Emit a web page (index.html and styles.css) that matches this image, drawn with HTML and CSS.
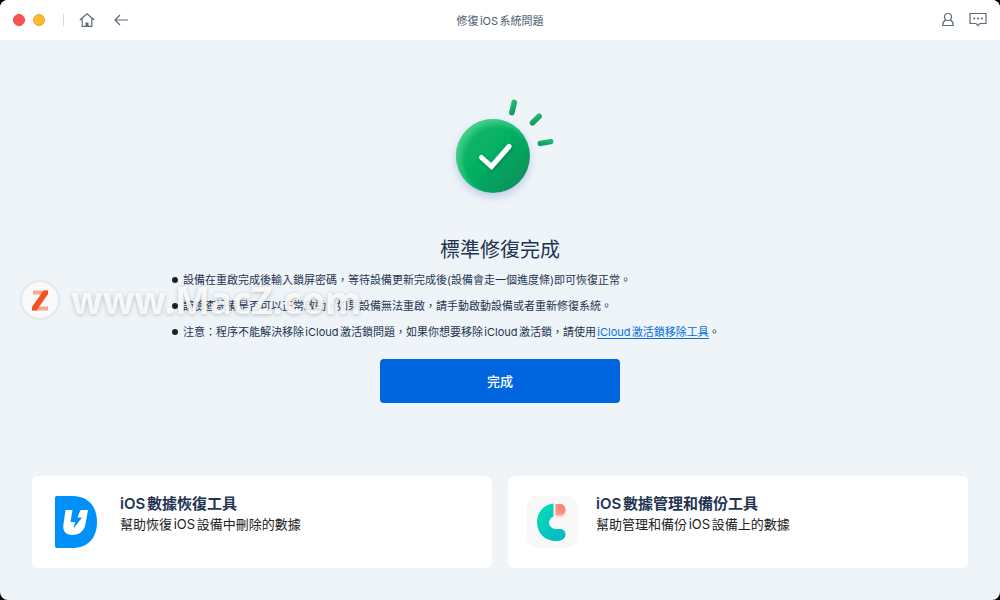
FILE: index.html
```html
<!DOCTYPE html>
<html lang="zh-Hant">
<head>
    <meta charset="UTF-8">
    <meta name="viewport" content="width=device-width, initial-scale=1.0">
    <title>修復iOS系統問題</title>
    <link rel="stylesheet" href="styles.css">
</head>
<body>
    <div class="window">
        <header class="titlebar">
            <div class="titlebar-side">
                <button class="dot dot-close" aria-label="關閉"></button>
                <button class="dot dot-min" aria-label="最小化"></button>
                <span class="divider"></span>
                <button class="icon-btn" aria-label="首頁">
                    <svg width="16" height="16" viewBox="0 0 16 16">
                        <path d="M.8 8 8 1.8 15.2 8M3.2 6.5V14.4H12.8V6.5" />
                        <path class="door" d="M6.5 14.4V10.5H9.5V14.4Z" />
                    </svg>
                </button>
                <button class="icon-btn icon-back" aria-label="返回">
                    <svg width="16" height="16" viewBox="0 0 16 16">
                        <path d="M15 8H2M7 3 2 8 7 13" />
                    </svg>
                </button>
            </div>
            <h1 class="titlebar-title">修復iOS系統問題</h1>
            <div class="titlebar-side titlebar-right">
                <button class="icon-btn" aria-label="帳戶">
                    <svg width="14" height="16" viewBox="0 0 14 16">
                        <circle cx="7" cy="5" r="3.5" />
                        <path d="M4.6 8C2.7 9 1.7 11 1.7 13.5H12.3C12.3 11 11.3 9 9.4 8" />
                    </svg>
                </button>
                <button class="icon-btn" aria-label="意見反饋">
                    <svg width="18" height="16" viewBox="0 0 18 16">
                        <path d="M1 1.5H17V11.5H11L9 13.7 7 11.5H1Z" />
                        <path class="dots" d="M4.5 6.5H6.2M8.2 6.5H9.9M11.9 6.5H13.6" />
                    </svg>
                </button>
            </div>
        </header>

        <main class="content">
            <svg class="success" width="120" height="120" viewBox="0 0 120 120" aria-hidden="true">
                <defs>
                    <linearGradient id="ball" x1="0" y1="0" x2="1" y2="1">
                        <stop offset="0" stop-color="#0cb868" />
                        <stop offset=".45" stop-color="#06b164" />
                        <stop offset="1" stop-color="#078a57" />
                    </linearGradient>
                    <radialGradient id="rim" cx=".56" cy=".56" r=".56">
                        <stop offset=".78" stop-color="#4fd894" stop-opacity="0" />
                        <stop offset="1" stop-color="#4fd894" stop-opacity=".75" />
                    </radialGradient>
                    <linearGradient id="ray" x1="0" y1="0" x2="1" y2="1">
                        <stop offset="0" stop-color="#2cc47c" />
                        <stop offset="1" stop-color="#0b9159" />
                    </linearGradient>
                    <filter id="ballShadow" x="-30%" y="-30%" width="160%" height="160%">
                        <feDropShadow dx="0" dy="4" stdDeviation="5" flood-color="#8fa3d8" flood-opacity=".5" />
                    </filter>
                    <filter id="checkShadow" x="-30%" y="-30%" width="160%" height="160%">
                        <feDropShadow dx="1" dy="2" stdDeviation="1.5" flood-color="#04683c" flood-opacity=".55" />
                    </filter>
                </defs>
                <circle cx="53" cy="66" r="37" fill="url(#ball)" filter="url(#ballShadow)" />
                <circle cx="53" cy="66" r="37" fill="url(#rim)" />
                <path class="check" d="M41.5 67.5 51.5 76.5 69 56.5" filter="url(#checkShadow)" />
                <g fill="url(#ray)">
                    <rect x="70.2" y="9.5" width="5.6" height="16" rx="2.8" transform="rotate(13 73 17.5)" />
                    <rect x="93" y="22" width="5.6" height="15" rx="2.8" transform="rotate(45 95.8 29.5)" />
                    <rect x="102.8" y="44.5" width="5.4" height="16" rx="2.7" transform="rotate(80 105.5 52.5)" />
                </g>
            </svg>
            <h2 class="headline">標準修復完成</h2>
            <ul class="notes">
                <li>設備在重啟完成後輸入鎖屏密碼，等待設備更新完成後(設備會走一個進度條)即可恢復正常。</li>
                <li>請檢查設備是否可以正常啟動，如果設備無法重啟，請手動啟動設備或者重新修復系統。</li>
                <li>注意：程序不能解決移除iCloud激活鎖問題，如果你想要移除iCloud激活鎖，請使用<a href="#">iCloud激活鎖移除工具</a>。</li>
            </ul>
            <button class="done">完成</button>
        </main>

        <section class="tools">
            <a class="tool" href="#">
                <svg width="52" height="52" viewBox="0 0 52 52" aria-hidden="true">
                    <path fill="#0090fb" d="M5 0H20C36 0 45 10 45 26S36 52 20 52H5Q3 52 3 50V2Q3 0 5 0Z" />
                    <path fill="#fff" d="M13.5 14H20.5L18.5 26H23L21.5 32.5 30 21.500H25.500L28.500 14H36L33.500 28C32 35.500 27 39 20.500 39C13.500 39 10.300 35 11.500 28Z" />
                </svg>
                <span class="tool-text">
                    <strong>iOS數據恢復工具</strong>
                    <span>幫助恢復iOS設備中刪除的數據</span>
                </span>
            </a>
            <a class="tool" href="#">
                <svg width="52" height="52" viewBox="0 0 52 52" aria-hidden="true">
                    <defs>
                        <linearGradient id="teal" x1="0" y1="0" x2="1" y2="1">
                            <stop offset="0" stop-color="#03dfb4" />
                            <stop offset="1" stop-color="#06b5c8" />
                        </linearGradient>
                        <linearGradient id="coral" x1="1" y1="0" x2="0" y2="1">
                            <stop offset="0" stop-color="#fb7b72" />
                            <stop offset="1" stop-color="#ff9d8c" />
                        </linearGradient>
                        <filter id="coralShadow" x="-50%" y="-50%" width="200%" height="200%">
                            <feDropShadow dx="0" dy="2" stdDeviation="1" flood-color="#e08078" flood-opacity=".4" />
                        </filter>
                    </defs>
                    <rect width="51" height="52" rx="10" fill="#f8f8f9" />
                    <path fill="url(#teal)" d="M26.500 7.500V20.500C23.500 21.500 22 24 22 26.500C22 30 25 33 29 33H33C36.500 33 38.500 35.500 38.500 38.500C38.500 43 34 45 29 45C18 45 10 37 10 26.500C10 16 17 8.500 26.500 7.500Z" />
                    <path fill="url(#coral)" filter="url(#coralShadow)" d="M28.500 8H33C36.500 8 38.500 10.500 38.500 13.500S36.500 19 33 19H28.500Z" />
                </svg>
                <span class="tool-text">
                    <strong>iOS數據管理和備份工具</strong>
                    <span>幫助管理和備份iOS設備上的數據</span>
                </span>
            </a>
        </section>

        <div class="watermark">
            <svg width="36" height="36" viewBox="0 0 36 36" aria-hidden="true">
                <circle cx="18" cy="18" r="18" fill="#fafafa" />
                <path fill="#fba58c" d="M11 8.500H26V12.500H11ZM10 24.500H26V28.500H10Z" />
                <path fill="#f4511e" d="M21.500 8.500H26V12L14.500 28.500H10V25Z" />
            </svg>
            <span>www.MacZ.com</span>
        </div>
    </div>
</body>
</html>
```
FILE: styles.css
```css
:root {
    --bg: #eff4f9;
    --text: #1f3450;
    --icon: #5d6b7a;
    --primary: #0066df;
}

* {
    margin: 0;
    padding: 0;
    box-sizing: border-box;
}

body {
    font-family: Inter, 'Noto Sans CJK TC', sans-serif;
    background: #000;
    color: var(--text);
    text-autospace: normal;
}

button {
    border: none;
    background: none;
    font-family: inherit;
    cursor: pointer;
}

.window {
    position: relative;
    display: flex;
    flex-direction: column;
    min-height: 100vh;
    background: var(--bg);
    border-radius: 8px;
    overflow: hidden;
}

/* title bar */
.titlebar {
    display: flex;
    align-items: center;
    height: 40px;
    padding: 0 13px;
    background: #fff;
}

.titlebar-side {
    display: flex;
    flex: 1;
    align-items: center;
}

.titlebar-right {
    justify-content: flex-end;
    gap: 14px;
}

.titlebar-title {
    font-size: 11px;
    font-weight: 400;
    color: #4d5c6e;
}

.dot {
    width: 12px;
    height: 12px;
    margin-right: 8px;
    border-radius: 50%;
}

.dot-close {
    background: #fb5350;
    border: 1px solid #e8484a;
}

.dot-min {
    background: #fdb92f;
    border: 1px solid #e9a72e;
}

.divider {
    width: 1px;
    height: 12px;
    margin: 0 15px 0 10px;
    background: #d5d9de;
}

.icon-btn {
    display: flex;
}

.icon-back {
    margin-left: 18px;
}

.icon-btn svg {
    fill: none;
    stroke: var(--icon);
    stroke-width: 1.2;
}

.icon-btn .door {
    fill: var(--icon);
    stroke: none;
}

.icon-btn .dots {
    stroke-width: 2;
}

/* result */
.content {
    display: flex;
    flex-direction: column;
    flex: 1;
    align-items: center;
    padding: 50px 24px 32px;
}

.check {
    fill: none;
    stroke: #fff;
    stroke-width: 5;
    stroke-linecap: round;
}

.headline {
    margin-top: 25px;
    font-size: 20px;
    font-weight: 400;
    line-height: 30px;
}

.notes {
    width: 100%;
    max-width: 660px;
    margin-top: 2px;
    list-style: none;
    font-size: 11px;
    line-height: 26px;
}

.notes li {
    position: relative;
    padding-left: 13px;
}

.notes li::before {
    content: '';
    position: absolute;
    top: 10px;
    left: 2px;
    width: 6px;
    height: 6px;
    border-radius: 50%;
    background: #1c222b;
}

.notes a {
    color: #0670e0;
    text-underline-offset: 2px;
}

.done {
    width: 240px;
    height: 44px;
    margin-top: 14px;
    padding-bottom: 2px;
    border-radius: 4px;
    background: var(--primary);
    color: #fff;
    font-size: 13px;
    font-weight: 500;
}

/* related tools */
.tools {
    display: grid;
    grid-template-columns: 1fr 1fr;
    gap: 16px;
    padding: 0 32px 32px;
}

.tool {
    display: flex;
    align-items: center;
    gap: 17px;
    min-height: 92px;
    padding: 17px 19px;
    border-radius: 6px;
    background: #fff;
    color: #222;
    text-decoration: none;
}

.tool:first-child {
    padding-left: 20px;
    gap: 16px;
}

.tool-text {
    display: flex;
    flex-direction: column;
    align-self: flex-start;
    font-size: 13px;
    line-height: 21px;
}

.tool-text strong {
    color: var(--text);
    font-size: 15px;
    font-weight: 600;
}

.watermark {
    position: absolute;
    top: 276px;
    left: 22px;
    display: flex;
    align-items: center;
    gap: 13px;
    color: rgba(255, 255, 255, .85);
    font-family: 'Noto Sans', sans-serif;
    font-size: 37px;
    font-weight: 700;
    line-height: 48px;
    text-shadow: 0 1px 4px rgba(0, 0, 0, .22);
    pointer-events: none;
}

.watermark svg {
    border-radius: 50%;
    box-shadow: 0 0 4px rgba(0, 0, 0, .15);
}
```
